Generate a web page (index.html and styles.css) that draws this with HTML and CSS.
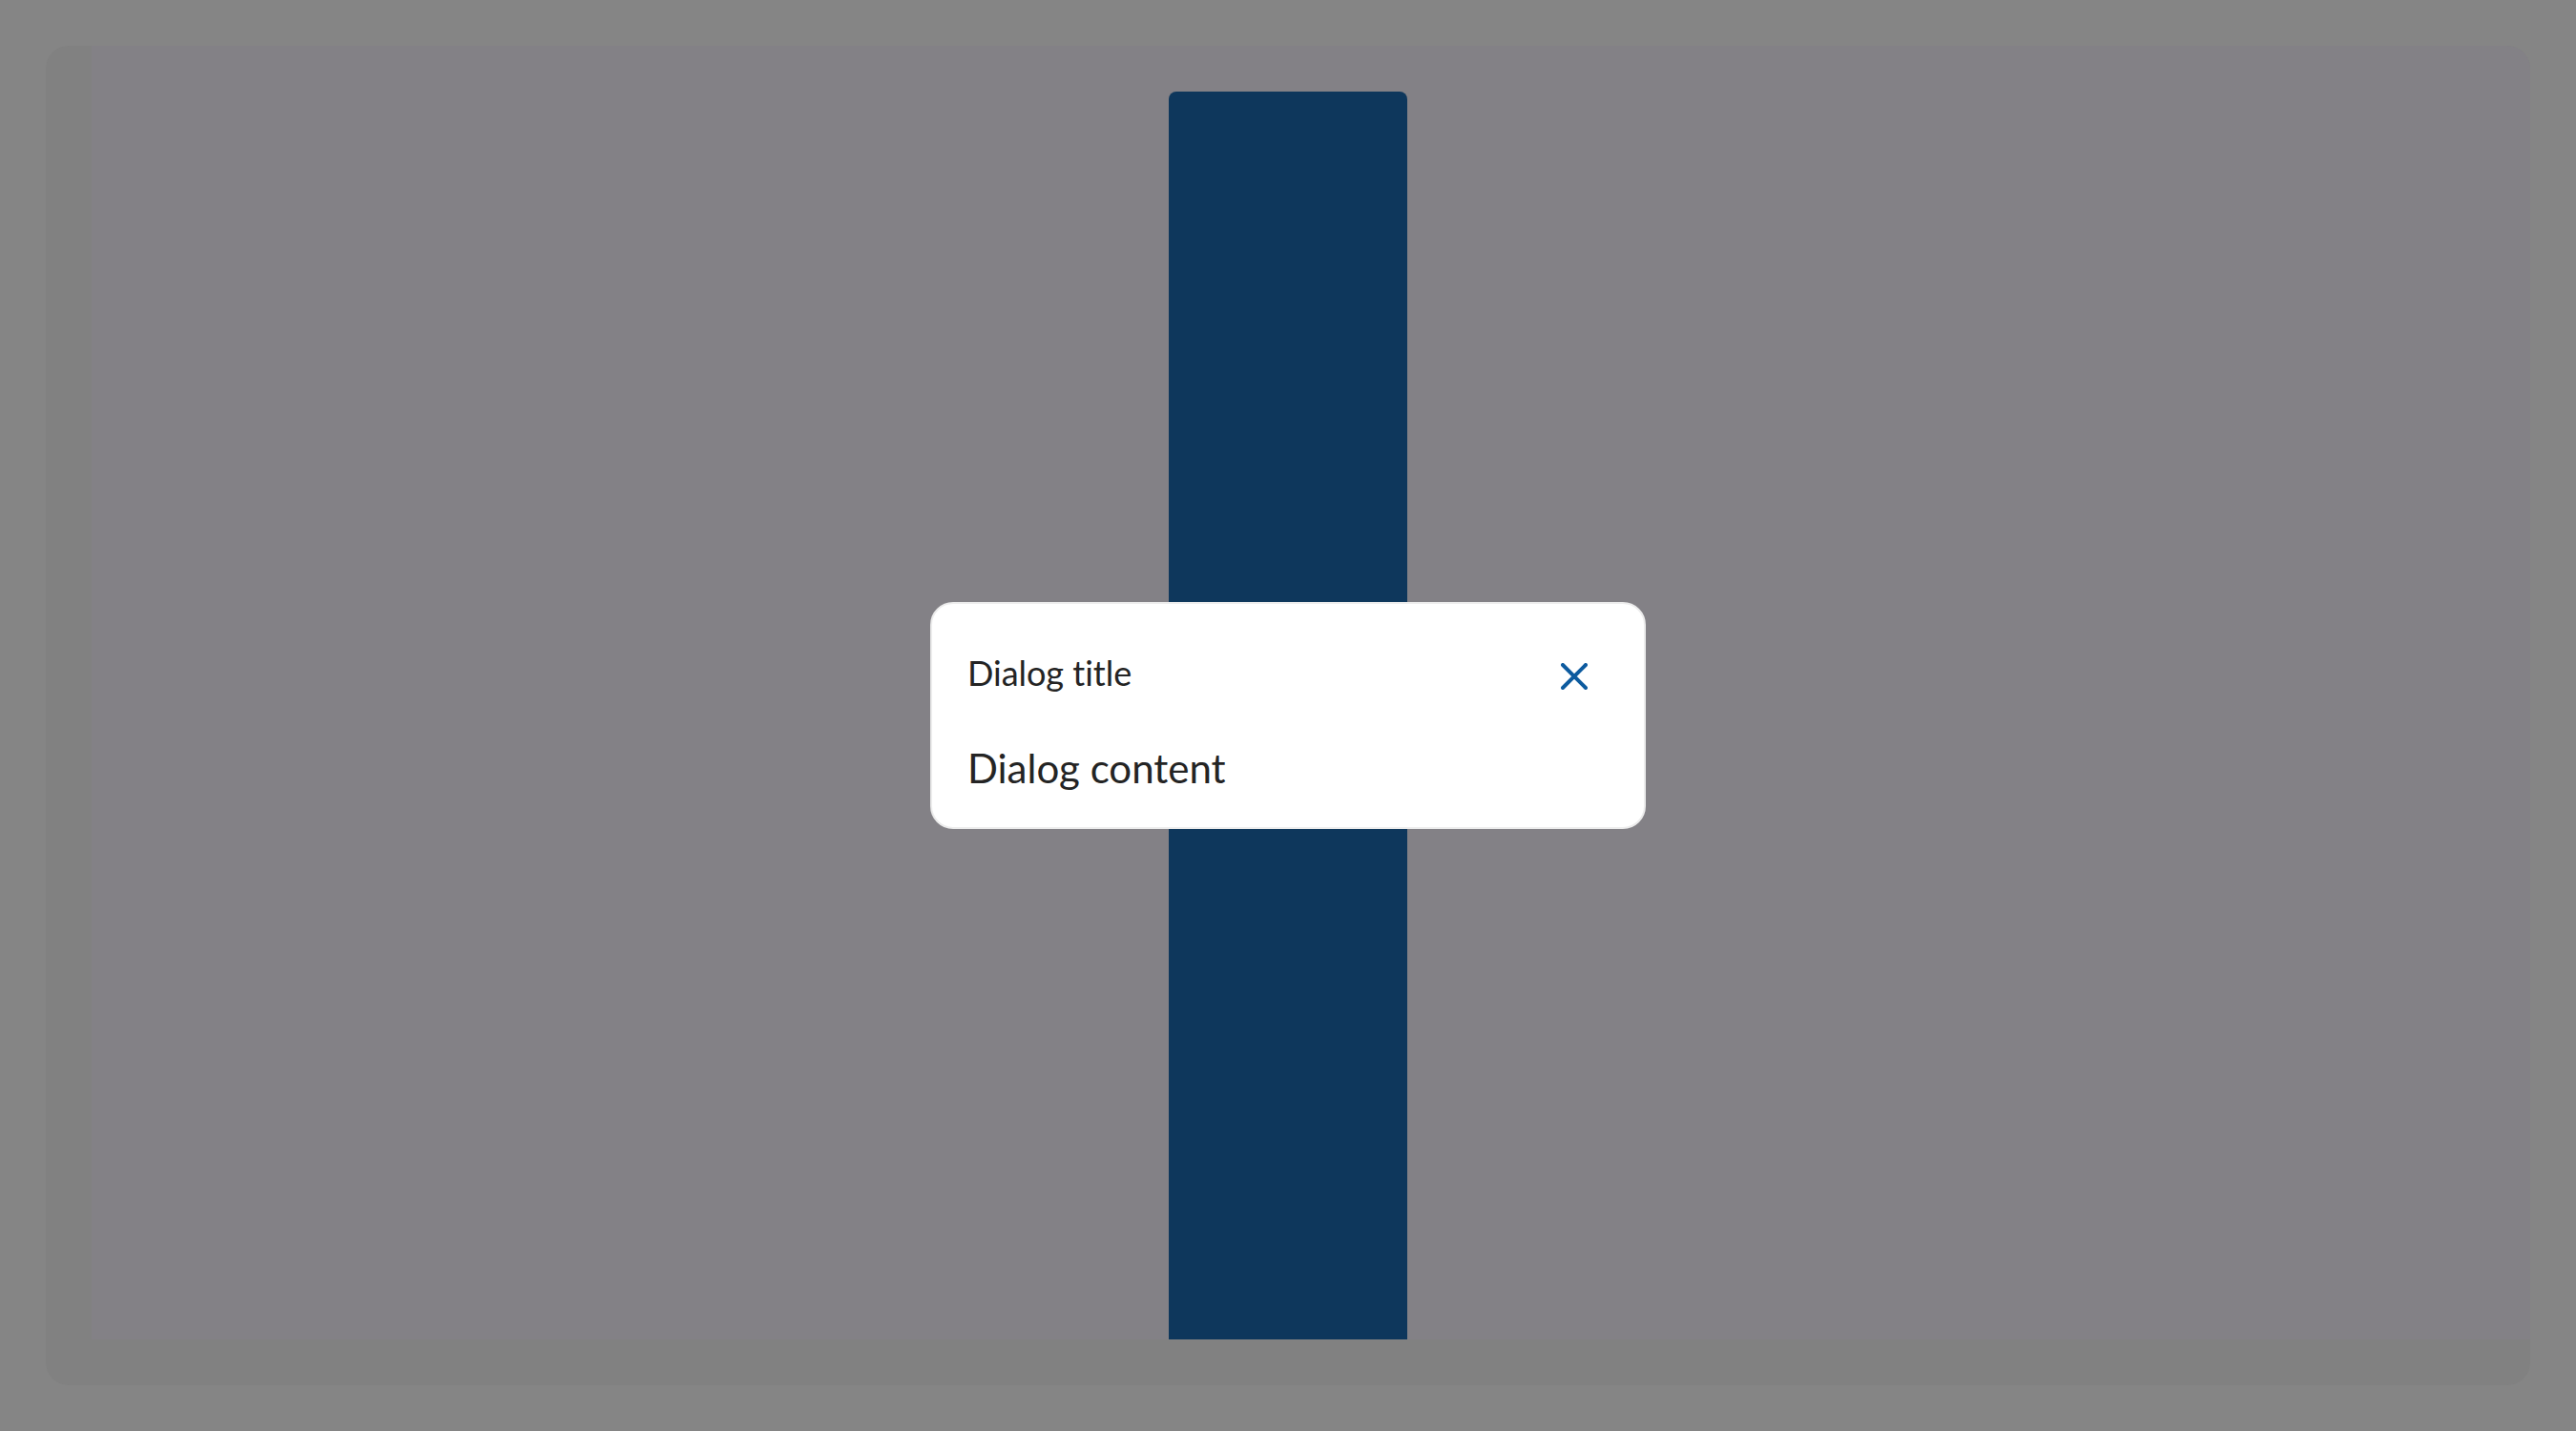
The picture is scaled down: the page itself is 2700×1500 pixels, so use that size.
FILE: index.html
```html
<!DOCTYPE html>
<html lang="en">
<head>
<meta charset="utf-8">
<title>Dialog</title>
<link rel="stylesheet" href="styles.css">
</head>
<body>
<div class="frame">
  <div class="stage">
    <div class="bar"></div>
  </div>
</div>
<div class="backdrop">
  <div class="dialog" role="dialog" aria-labelledby="dlg-title">
    <div class="dialog-header">
      <h2 class="dialog-title" id="dlg-title">Dialog title</h2>
      <button class="dialog-close" type="button" aria-label="Close">
        <svg width="28" height="28" viewBox="0 0 28 28" aria-hidden="true">
          <path d="M2 2 L26 26 M26 2 L2 26" fill="none" stroke="currentColor" stroke-width="4" stroke-linecap="round"/>
        </svg>
      </button>
    </div>
    <div class="dialog-body">Dialog content</div>
  </div>
</div>
</body>
</html>
```

FILE: styles.css
```css
* {
  box-sizing: border-box;
}

html, body {
  margin: 0;
  height: 100%;
}

body {
  background: #858585;
  font-family: Lato, "Liberation Sans", sans-serif;
  font-variant-ligatures: no-common-ligatures;
  overflow: hidden;
}

.frame {
  margin: 48px;
  height: calc(100vh - 96px);
  border-radius: 24px;
  background: #818181;
  padding: 0 0 48px 48px;
  overflow: hidden;
}

.stage {
  height: 100%;
  background: #838186;
  display: flex;
  justify-content: center;
  padding-top: 48px;
  padding-right: 48px;
}

.bar {
  width: 250px;
  height: 100%;
  background: #0e375c;
  border-radius: 8px 8px 0 0;
}

.backdrop {
  position: fixed;
  inset: 0;
  display: flex;
  align-items: center;
  justify-content: center;
}

.dialog {
  width: 750px;
  background: #ffffff;
  border: 2px solid #ececec;
  border-radius: 24px;
  padding: 40px 38px 37px 37px;
  color: #242424;
}

.dialog-header {
  display: flex;
  align-items: flex-start;
  justify-content: space-between;
}

.dialog-title {
  margin: 11px 0 0 0;
  font-size: 36px;
  font-weight: 400;
  line-height: 1.2;
}

.dialog-close {
  margin: 22px 21px 0 0;
  padding: 0;
  border: 0;
  background: none;
  color: #0d5b9f;
  width: 28px;
  height: 28px;
  display: flex;
  cursor: pointer;
}

.dialog-body {
  margin-top: 53px;
  font-size: 42px;
  line-height: 1.2;
}
```
